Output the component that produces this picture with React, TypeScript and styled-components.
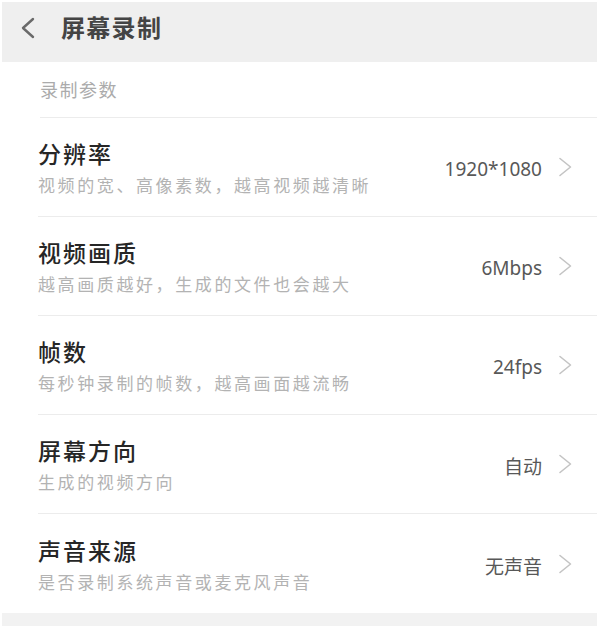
import React, { FC } from 'react'
import styled, { createGlobalStyle } from 'styled-components'

const GlobalStyle = createGlobalStyle`
  html, body {
    margin: 0;
    padding: 0;
    background: #ffffff;
  }
  body {
    font-family: "Noto Sans CJK SC", "Noto Sans", sans-serif;
  }
`

interface SettingItem {
  title: string
  desc: string
  value: string
}

const items: SettingItem[] = [
  { title: '分辨率', desc: '视频的宽、高像素数，越高视频越清晰', value: '1920*1080' },
  { title: '视频画质', desc: '越高画质越好，生成的文件也会越大', value: '6Mbps' },
  { title: '帧数', desc: '每秒钟录制的帧数，越高画面越流畅', value: '24fps' },
  { title: '屏幕方向', desc: '生成的视频方向', value: '自动' },
  { title: '声音来源', desc: '是否录制系统声音或麦克风声音', value: '无声音' },
]

const Chevron: FC<{ left?: boolean }> = ({ left }) =>
  left ? (
    <BackIcon viewBox="0 0 16 22" fill="none">
      <path d="M13 2 L3 11 L13 20" stroke="#6a6a6a" strokeWidth="2.4" strokeLinecap="round" strokeLinejoin="round" />
    </BackIcon>
  ) : (
    <ArrowIcon viewBox="0 0 15 20" fill="none">
      <path d="M2 1.5 L12.5 10 L2 18.5" stroke="#c4c4c4" strokeWidth="1.6" strokeLinecap="round" strokeLinejoin="round" />
    </ArrowIcon>
  )

export default function App() {
  return (
    <>
      <GlobalStyle />
      <Screen>
        <Header>
          <Chevron left />
          <Title>屏幕录制</Title>
        </Header>
        <List>
          <SectionLabel>录制参数</SectionLabel>
          {items.map(item => (
            <Row key={item.title}>
              <TextBlock>
                <RowTitle>{item.title}</RowTitle>
                <RowDesc>{item.desc}</RowDesc>
              </TextBlock>
              <Value>{item.value}</Value>
              <Chevron />
            </Row>
          ))}
        </List>
        <Footer />
      </Screen>
    </>
  )
}

const Screen = styled.div`
  width: 595px;
  padding: 2px 3px 10px 2px;
  background: #ffffff;
`

const Header = styled.div`
  height: 60px;
  background: #efefef;
  display: flex;
  align-items: center;
  padding: 0 0 8px 18px;
  box-sizing: border-box;
`

const BackIcon = styled.svg`
  width: 16px;
  height: 22px;
`

const Title = styled.div`
  margin-left: 25px;
  margin-top: -3px;
  font-size: 24px;
  letter-spacing: 1.3px;
  font-weight: 700;
  color: #444444;
`

const List = styled.div`
  display: flex;
  flex-direction: column;
`

const SectionLabel = styled.div`
  height: 56px;
  box-sizing: border-box;
  margin-left: 38px;
  padding-bottom: 2px;
  display: flex;
  align-items: center;
  font-size: 18px;
  letter-spacing: 1.5px;
  color: #ababab;
  border-bottom: 1px solid #ececec;
`

const Row = styled.div`
  height: 99px;
  box-sizing: border-box;
  margin-left: 36px;
  padding-right: 24px;
  display: flex;
  align-items: center;
  border-bottom: 1px solid #ececec;

  &:last-child {
    border-bottom: none;
  }
`

const TextBlock = styled.div`
  flex: 1;
  display: flex;
  flex-direction: column;
  margin-top: 2px;
`

const RowTitle = styled.div`
  font-size: 23px;
  letter-spacing: 2px;
  line-height: 30px;
  font-weight: 500;
  color: #262626;
`

const RowDesc = styled.div`
  margin-top: 4px;
  font-size: 17px;
  letter-spacing: 2.6px;
  line-height: 26px;
  color: #b3b3b3;
`

const Value = styled.div`
  font-family: "Noto Sans", "Noto Sans CJK SC", sans-serif;
  font-size: 19px;
  color: #585858;
  margin: 4px 16px 0 0;
`

const ArrowIcon = styled.svg`
  width: 15px;
  height: 20px;
`

const Footer = styled.div`
  height: 13px;
  background: #f2f2f2;
`
